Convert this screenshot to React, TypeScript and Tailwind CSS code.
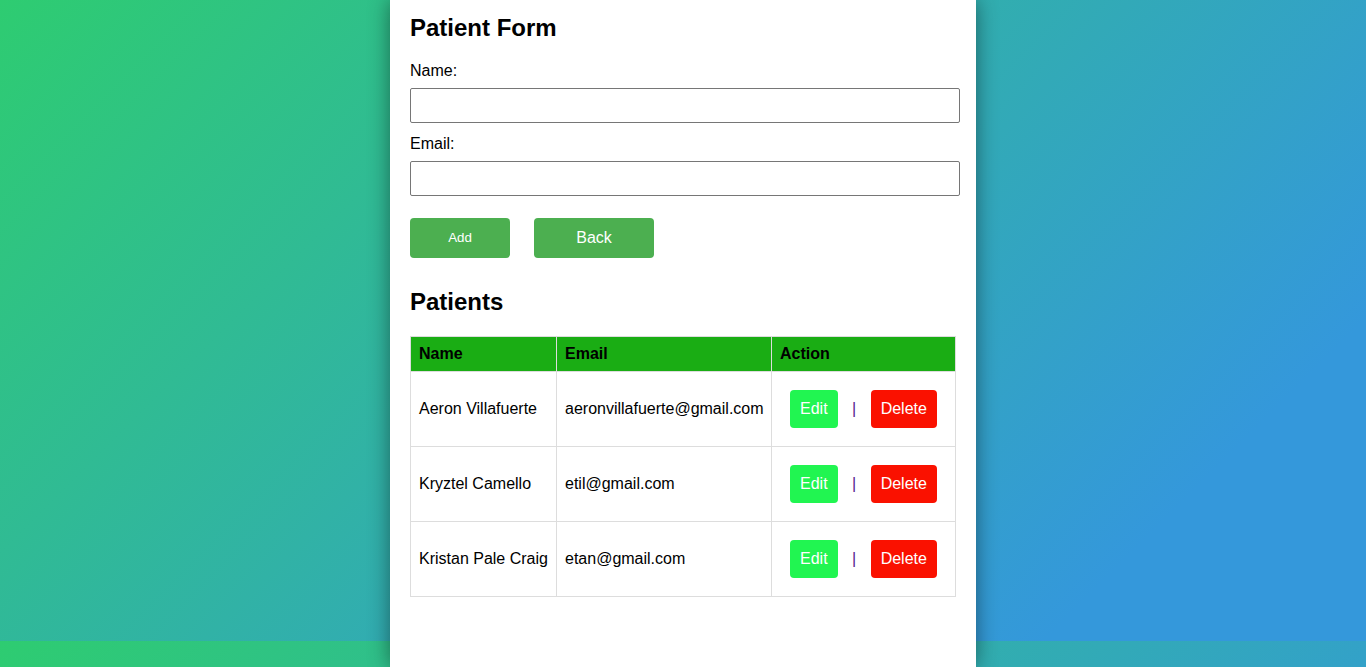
import React from "react";

const patients = [
  { name: "Aeron Villafuerte", email: "aeronvillafuerte@gmail.com" },
  { name: "Kryztel Camello", email: "etil@gmail.com" },
  { name: "Kristan Pale Craig", email: "etan@gmail.com" },
];

export default function App() {
  return (
    <div
      className="h-[667px] w-full overflow-hidden bg-[linear-gradient(135deg,#2ecc71_0%,#3498db_84%)] bg-[length:100%_641px] bg-repeat text-black"
      style={{ fontFamily: '"Liberation Sans", Arial, sans-serif' }}
    >
      <div className="flex justify-center h-full">
        <div className="w-[586px] h-full bg-white shadow-[0_0_20px_rgba(0,0,0,0.45)] px-5 pt-[14px]">
          <h2 className="text-[24px] leading-[28px] font-bold">Patient Form</h2>
          <div className="mt-[20px] text-[16px] leading-[18px]">Name:</div>
          <input
            type="text"
            className="mt-[8px] block w-[550px] h-[35px] border border-[#767676] rounded-[2px] outline-none"
          />
          <div className="mt-[12px] text-[16px] leading-[18px]">Email:</div>
          <input
            type="text"
            className="mt-[8px] block w-[550px] h-[35px] border border-[#767676] rounded-[2px] outline-none"
          />
          <div className="mt-[22px] flex gap-6">
            <button className="w-[100px] h-[40px] bg-[#4caf50] text-white text-[13.33px] rounded-[4px]">
              Add
            </button>
            <button className="w-[120px] h-[40px] bg-[#4caf50] text-white text-[16px] rounded-[4px]">
              Back
            </button>
          </div>
          <h2 className="mt-[30px] text-[24px] leading-[28px] font-bold">Patients</h2>
          <table className="mt-[20px] w-[545px] border-collapse text-[16px] leading-[18px] table-fixed">
            <colgroup>
              <col className="w-[146px]" />
              <col className="w-[215px]" />
              <col className="w-[184px]" />
            </colgroup>
            <thead>
              <tr className="bg-[#1aad14] h-[35px]">
                <th className="border border-[#ddd] px-2 text-left font-bold">Name</th>
                <th className="border border-[#ddd] px-2 text-left font-bold">Email</th>
                <th className="border border-[#ddd] px-2 text-left font-bold">Action</th>
              </tr>
            </thead>
            <tbody>
              {patients.map((p) => (
                <tr key={p.email} className="h-[75px]">
                  <td className="border border-[#ddd] px-2 whitespace-nowrap">{p.name}</td>
                  <td className="border border-[#ddd] px-2 whitespace-nowrap">{p.email}</td>
                  <td className="border border-[#ddd] px-2 whitespace-nowrap">
                    <button className="mx-[10px] p-[10px] bg-[#21f551] text-white rounded-[4px] leading-[18px]">
                      Edit
                    </button>{" "}
                    <span className="text-[#551a8b]">|</span>{" "}
                    <button className="mx-[10px] p-[10px] bg-[#fa1100] text-white rounded-[4px] leading-[18px]">
                      Delete
                    </button>
                  </td>
                </tr>
              ))}
            </tbody>
          </table>
        </div>
      </div>
    </div>
  );
}
